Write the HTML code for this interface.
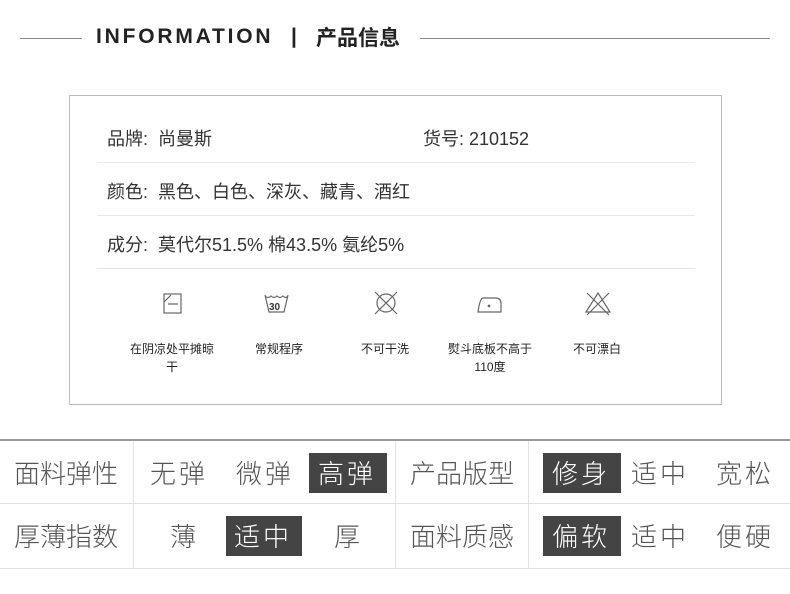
<!DOCTYPE html>
<html><head><meta charset="utf-8"><style>
*{margin:0;padding:0;box-sizing:border-box}
body{width:790px;height:594px;background:#fff;position:relative;overflow:hidden;font-family:"Liberation Sans","Noto Sans CJK SC",sans-serif;color:#333}
.a{position:absolute}
.hl{position:absolute;height:1px;background:#888}
.t{position:absolute;white-space:nowrap}
.dv{position:absolute;left:97px;width:598px;height:1px;background:#e6e6e6}
.lbl{position:absolute;font-size:12px;color:#222;text-align:center;width:110px;line-height:18px}
.g{position:absolute;font-size:26px;color:#555;font-family:"Noto Sans CJK SC",sans-serif;font-weight:300;line-height:36px;white-space:nowrap;letter-spacing:3px}
.dk{background:#444;color:#fff}
.vl{position:absolute;width:1px;background:#e2e2e2;top:441px;height:127px}
</style></head><body>
<div class="hl" style="left:20px;top:38px;width:62px"></div>
<div class="t" style="left:96px;top:25px;font-size:21px;font-weight:bold;letter-spacing:2.8px;color:#222">INFORMATION</div>
<div class="t" style="left:291px;top:25px;font-size:21px;font-weight:bold;color:#222">|</div>
<div class="t" style="left:316px;top:22px;font-size:21px;font-weight:bold;color:#222">产品信息</div>
<div class="hl" style="left:420px;top:38px;width:350px"></div>

<div class="a" style="left:69px;top:95px;width:653px;height:310px;border:1px solid #bbb"></div>
<div class="t" style="left:107px;top:125px;font-size:18px">品牌:&nbsp; 尚曼斯</div>
<div class="t" style="left:423px;top:125px;font-size:18px">货号: 210152</div>
<div class="dv" style="top:162px"></div>
<div class="t" style="left:107px;top:178px;font-size:18px">颜色:&nbsp; 黑色、白色、深灰、藏青、酒红</div>
<div class="dv" style="top:215px"></div>
<div class="t" style="left:107px;top:231px;font-size:18px">成分:&nbsp; 莫代尔51.5% 棉43.5% 氨纶5%</div>
<div class="dv" style="top:268px"></div>

<svg class="a" style="left:150px;top:285px" width="470" height="40" fill="none" stroke="#666" stroke-width="1.2">
<rect x="14" y="9" width="17" height="19"/><path d="M14 17 L21 10 M18 19 H28"/>
<path d="M115 10 L119 27 H134 L138 10 M115 11 q3 3 6 0 q3 3 6 0 q3 3 6 0 q3 3 5 0"/>
<text x="119" y="25" font-size="10" fill="#333" stroke="none" font-weight="bold" font-family="Liberation Sans">30</text>
<circle cx="236" cy="18" r="9"/><path d="M225 7 L247 29 M247 7 L225 29"/>
<path d="M328 27 H351 V18 Q351 13 345 13 H333 Q330 13 328 27 Z"/><circle cx="339" cy="21" r="0.8" fill="#555"/>
<path d="M436 27 L448 8 L460 27 Z M437 8 L459 30 M459 8 L437 30"/>
</svg>
<div class="lbl" style="left:117px;top:340px">在阴凉处平摊晾<br>干</div>
<div class="lbl" style="left:224px;top:340px">常规程序</div>
<div class="lbl" style="left:330px;top:340px">不可干洗</div>
<div class="lbl" style="left:435px;top:340px">熨斗底板不高于<br>110度</div>
<div class="lbl" style="left:542px;top:340px">不可漂白</div>

<div class="a" style="left:0;top:439px;width:790px;height:2px;background:#999"></div>
<div class="a" style="left:0;top:503px;width:790px;height:1px;background:#e2e2e2"></div>
<div class="a" style="left:0;top:568px;width:790px;height:1px;background:#e2e2e2"></div>
<div class="vl" style="left:133px"></div>
<div class="vl" style="left:395px"></div>
<div class="vl" style="left:528px"></div>

<div class="g" style="left:14px;top:455px;letter-spacing:0">面料弹性</div>
<div class="g" style="left:150px;top:455px">无弹</div>
<div class="g" style="left:236px;top:455px">微弹</div>
<div class="g dk" style="left:309px;top:453px;width:78px;height:40px;line-height:40px;padding-left:9px">高弹</div>
<div class="g" style="left:410px;top:455px;letter-spacing:0">产品版型</div>
<div class="g dk" style="left:543px;top:453px;width:78px;height:40px;line-height:40px;padding-left:9px">修身</div>
<div class="g" style="left:631px;top:455px">适中</div>
<div class="g" style="left:716px;top:455px">宽松</div>

<div class="g" style="left:14px;top:518px;letter-spacing:0">厚薄指数</div>
<div class="g" style="left:170px;top:518px">薄</div>
<div class="g dk" style="left:226px;top:516px;width:76px;height:40px;line-height:40px;padding-left:8px">适中</div>
<div class="g" style="left:334px;top:518px">厚</div>
<div class="g" style="left:410px;top:518px;letter-spacing:0">面料质感</div>
<div class="g dk" style="left:543px;top:516px;width:78px;height:40px;line-height:40px;padding-left:9px">偏软</div>
<div class="g" style="left:631px;top:518px">适中</div>
<div class="g" style="left:716px;top:518px">便硬</div>
</body></html>
